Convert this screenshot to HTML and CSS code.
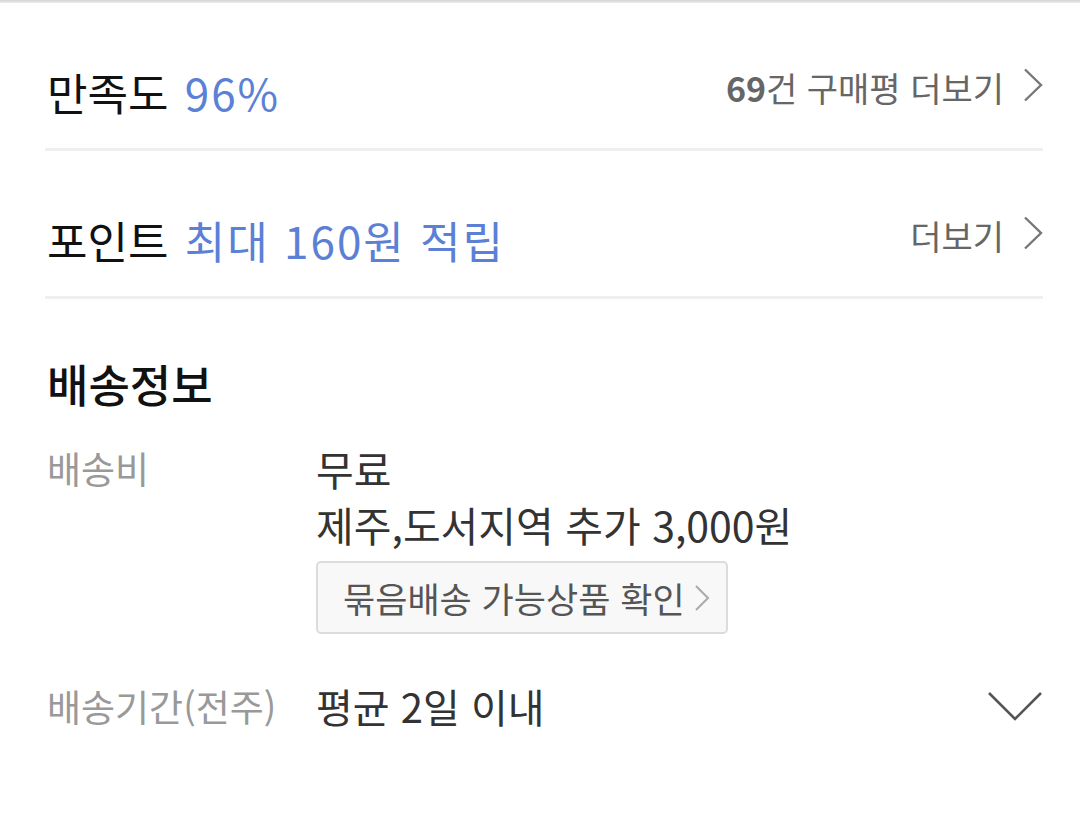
FILE: index.html
```html
<!DOCTYPE html>
<html lang="ko">
<head>
<meta charset="utf-8">
<link rel="stylesheet" href="styles.css">
</head>
<body>
<div class="topline"></div>
<main class="page">
  <section class="row">
    <div class="row-title">만족도 <span class="accent">96%</span></div>
    <a class="more"><span><b>69</b>건 구매평 더보기</span>
      <svg class="chev" width="20" height="34" viewBox="0 0 20 34"><path d="M2 1.5 L18 17 L2 32.5" fill="none" stroke="#777" stroke-width="2.4"/></svg>
    </a>
  </section>
  <section class="row">
    <div class="row-title">포인트 <span class="accent">최대 160원 적립</span></div>
    <a class="more"><span>더보기</span>
      <svg class="chev" width="20" height="34" viewBox="0 0 20 34"><path d="M2 1.5 L18 17 L2 32.5" fill="none" stroke="#777" stroke-width="2.4"/></svg>
    </a>
  </section>
  <section class="ship">
    <h2 class="ship-title">배송정보</h2>
    <div class="info">
      <div class="label">배송비</div>
      <div class="value">
        <div>무료</div>
        <div>제주,도서지역 추가 3,000원</div>
        <button class="bundle"><span>묶음배송 가능상품 확인</span>
          <svg width="16" height="28" viewBox="0 0 16 28"><path d="M2 2 L14 14 L2 26" fill="none" stroke="#aaa" stroke-width="2"/></svg>
        </button>
      </div>
    </div>
    <div class="info period">
      <div class="label">배송기간(전주)</div>
      <div class="value">평균 2일 이내</div>
      <svg class="down" width="56" height="32" viewBox="0 0 56 32"><path d="M2 3 L28 29 L54 3" fill="none" stroke="#555" stroke-width="2.6"/></svg>
    </div>
  </section>
</main>
</body>
</html>
```
FILE: styles.css
```css
* { box-sizing: border-box; }
html, body { margin: 0; padding: 0; background: #fff; }
body {
  font-family: "Noto Sans CJK KR", "Noto Sans", sans-serif;
  color: #111;
}
.topline {
  height: 3px;
  background: linear-gradient(#d4d4d4, #ececec);
}
.page {
  padding: 0 37px 0 45px;
}
.row {
  display: flex;
  align-items: center;
  justify-content: space-between;
  height: 148px;
  padding-top: 32px;
  border-bottom: 3px solid #efefef;
}
.row-title {
  font-size: 44px;
  line-height: 56px;
  padding-left: 2px;
}
.accent {
  color: #5b80d6;
  letter-spacing: 2px;
  margin-left: 4px;
}
.more {
  display: flex;
  align-items: center;
  gap: 19px;
  font-size: 34px;
  line-height: 44px;
  color: #666;
  margin-bottom: 8px;
}
.more b { font-weight: 700; }
.chev { margin-top: -6px; }
.ship { padding: 57px 0 0 2px; }
.ship-title {
  margin: 0;
  font-size: 45px;
  font-weight: 500;
  line-height: 56px;
}
.info {
  display: grid;
  grid-template-columns: 269px 1fr;
  margin-top: 28px;
}
.label {
  font-size: 37px;
  color: #999;
  line-height: 56px;
}
.value {
  font-size: 41px;
  color: #333;
  line-height: 56px;
}
.bundle {
  display: flex;
  align-items: center;
  gap: 9px;
  margin-top: 9px;
  height: 73px;
  padding: 0 16px 0 25px;
  background: #f8f8f8;
  border: 2px solid #dcdcdc;
  border-radius: 5px;
  font-family: inherit;
  font-size: 35px;
  color: #555;
}
.period {
  grid-template-columns: 269px 1fr auto;
  align-items: center;
  margin-top: 44px;
}
.period .value { font-size: 40px; }
```
